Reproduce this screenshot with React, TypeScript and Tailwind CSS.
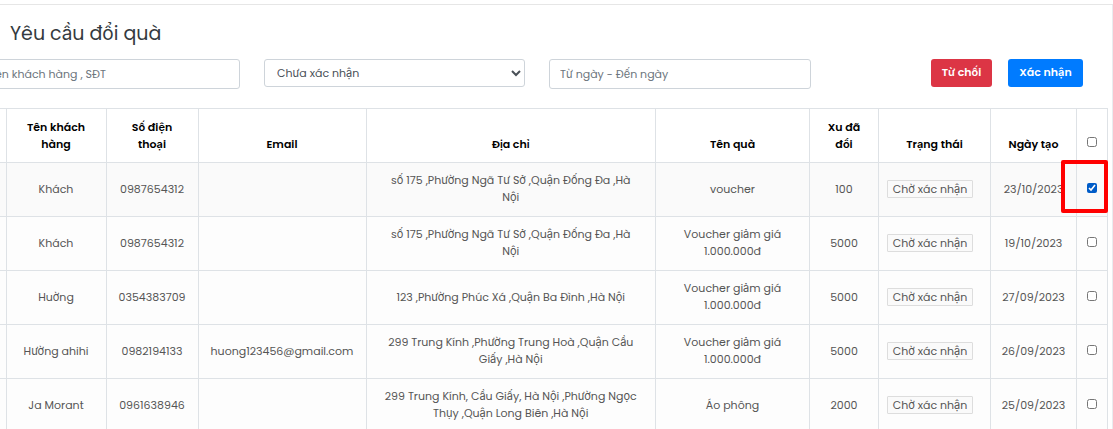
import { useState } from "react";

type Request = {
  name: string;
  phone: string;
  email: string;
  address: string;
  gift: string;
  coins: string;
  date: string;
};

const requests: Request[] = [
  { name: "Khách", phone: "0987654312", email: "", address: "số 175 ,Phường Ngã Tư Sở ,Quận Đống Đa ,Hà Nội", gift: "voucher", coins: "100", date: "23/10/2023" },
  { name: "Khách", phone: "0987654312", email: "", address: "số 175 ,Phường Ngã Tư Sở ,Quận Đống Đa ,Hà Nội", gift: "Voucher giảm giá 1.000.000đ", coins: "5000", date: "19/10/2023" },
  { name: "Huờng", phone: "0354383709", email: "", address: "123 ,Phường Phúc Xá ,Quận Ba Đình ,Hà Nội", gift: "Voucher giảm giá 1.000.000đ", coins: "5000", date: "27/09/2023" },
  { name: "Hường ahihi", phone: "0982194133", email: "huong123456@gmail.com", address: "299 Trung Kính ,Phường Trung Hoà ,Quận Cầu Giấy ,Hà Nội", gift: "Voucher giảm giá 1.000.000đ", coins: "5000", date: "26/09/2023" },
  { name: "Ja Morant", phone: "0961638946", email: "", address: "299 Trung Kính, Cầu Giấy, Hà Nội ,Phường Ngọc Thụy ,Quận Long Biên ,Hà Nội", gift: "Áo phông", coins: "2000", date: "25/09/2023" },
];

const head = "h-[54px] border border-[#dee2e6] px-2 pb-[9px] align-bottom font-semibold";
const cell = "h-[54px] border border-[#dee2e6] px-2 pb-px align-middle";
const field = "rounded-[3px] border border-[#ced4da] bg-white text-[#495057] placeholder:text-[#6c757d]";
const box = "mx-auto block size-[10px] accent-[#005cc8]";

export default function App() {
  const [selected, setSelected] = useState<boolean[]>([true, false, false, false, false]);
  const toggle = (i: number) => setSelected(selected.map((v, k) => (k === i ? !v : v)));

  return (
    <main className="h-screen overflow-hidden bg-white font-['Poppins','Inter',sans-serif] text-[11px] leading-[17px] text-[#555]">
      <div className="h-[5px] border-b border-[#e6e6e6]" />
      <section className="min-h-full border-r border-[#e9ecef] pr-1">
        <h1 className="px-[10px] pt-[15px] text-[19px] leading-7 text-[#343a40]">Yêu cầu đổi quà</h1>

        <form className="-ml-[22px] mt-[11px] flex items-start gap-6" onSubmit={(e) => e.preventDefault()}>
          <input aria-label="Tên khách hàng, SĐT" placeholder="Tên khách hàng , SĐT" className={`${field} h-[30px] w-[262px] px-[10px]`} />
          <select aria-label="Trạng thái" defaultValue="pending" className={`${field} h-7 w-[261px] px-2`}>
            <option value="pending">Chưa xác nhận</option>
            <option value="done">Đã xác nhận</option>
          </select>
          <input aria-label="Từ ngày - Đến ngày" placeholder="Từ ngày - Đến ngày" className={`${field} h-[30px] w-[262px] px-[10px]`} />
          <div className="mr-[25px] ml-auto flex gap-4">
            <button type="button" className="h-7 w-[61px] rounded-[3px] bg-[#dc3545] pb-[2px] font-semibold text-white">Từ chối</button>
            <button type="button" className="h-7 w-[75px] rounded-[3px] bg-[#007bff] pb-[2px] font-semibold text-white">Xác nhận</button>
          </div>
        </form>

        <table className="mt-[19px] w-full table-fixed border-collapse text-center">
          <colgroup>
            <col className="w-[6px]" />
            <col className="w-[100px]" />
            <col className="w-[92px]" />
            <col className="w-[168px]" />
            <col />
            <col className="w-[154px]" />
            <col className="w-[69px]" />
            <col className="w-[112px]" />
            <col className="w-[86px]" />
            <col className="w-[31px]" />
          </colgroup>
          <thead className="text-black">
            <tr>
              <td className="border-y border-[#dee2e6]" />
              <th className={head}>Tên khách hàng</th>
              <th className={head}>Số điện<br />thoại</th>
              <th className={head}>Email</th>
              <th className={head}>Địa chỉ</th>
              <th className={head}>Tên quà</th>
              <th className={head}>Xu đã<br />đổi</th>
              <th className={head}>Trạng thái</th>
              <th className={head}>Ngày tạo</th>
              <th className="border border-[#dee2e6] pb-[15px] align-bottom">
                <input
                  type="checkbox"
                  aria-label="Chọn tất cả"
                  className={box}
                  checked={selected.every(Boolean)}
                  onChange={(e) => setSelected(selected.map(() => e.target.checked))}
                />
              </th>
            </tr>
          </thead>
          <tbody>
            {requests.map((r, i) => (
              <tr key={i} className="bg-[#fdfdfd] first:bg-[#fafafa]">
                <td className="border-y border-[#dee2e6]" />
                <td className={cell}>{r.name}</td>
                <td className={cell}>{r.phone}</td>
                <td className={cell}>{r.email}</td>
                <td className="border border-[#dee2e6] px-4 pb-px align-middle">{r.address}</td>
                <td className="border border-[#dee2e6] px-5 pb-px align-middle">{r.gift}</td>
                <td className={cell}>{r.coins}</td>
                <td className={cell}>
                  <span className="block w-[86px] rounded-[1px] border border-[#ddd] bg-[#fafafa] leading-4">Chờ xác nhận</span>
                </td>
                <td className={cell}>{r.date}</td>
                <td className="relative border border-[#dee2e6] pb-1 align-middle">
                  <input type="checkbox" aria-label={`Chọn ${r.name} ${r.date}`} className={box} checked={selected[i]} onChange={() => toggle(i)} />
                  {i === 0 && (
                    <div className="pointer-events-none absolute -top-[3px] -right-px h-[53px] w-[47px] rounded-[2px] border-4 border-[#f00]" />
                  )}
                </td>
              </tr>
            ))}
          </tbody>
        </table>
      </section>
    </main>
  );
}
